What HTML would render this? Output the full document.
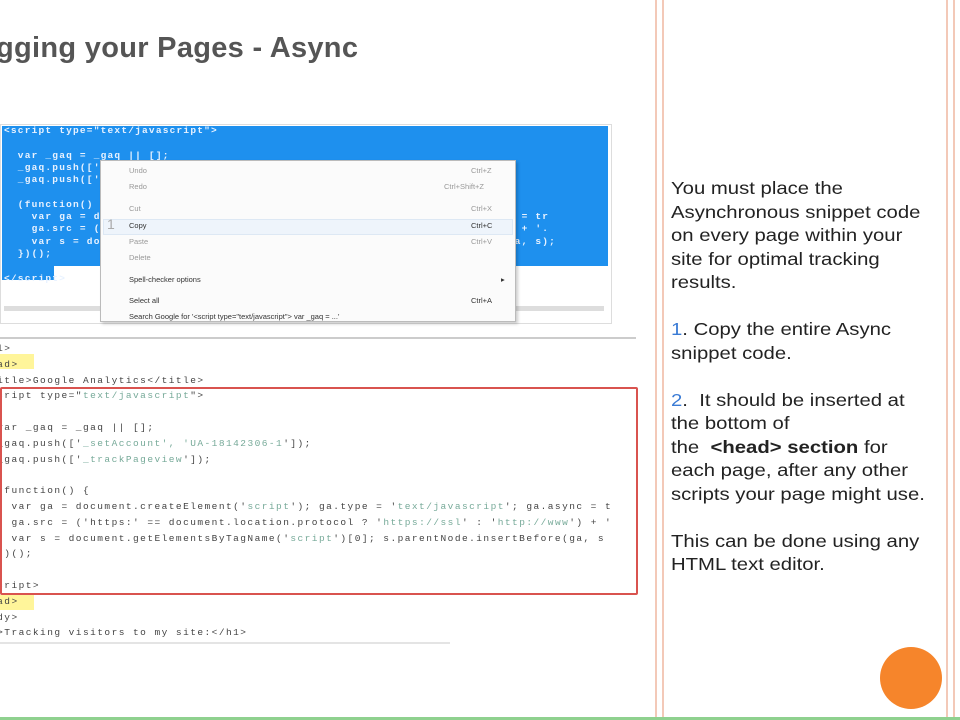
<!DOCTYPE html>
<html><head><meta charset="utf-8"><style>
*{margin:0;padding:0;box-sizing:border-box}
body{width:960px;height:720px;background:#fff;position:relative;overflow:hidden;font-family:"Liberation Sans",sans-serif}
.abs{position:absolute}
.v{position:absolute;top:0;height:718px;width:2px;background:#f3c9b8}
h1{position:absolute;left:-4px;top:32px;font-size:29px;font-weight:bold;color:#555;white-space:nowrap;letter-spacing:0.3px}
.code{font-family:"Liberation Mono",monospace;font-size:9.5px;white-space:pre;line-height:15.8px;color:#444;letter-spacing:1.45px}
.blue{color:#e8f2ff;line-height:12.3px;letter-spacing:1.2px}
.menu{position:absolute;left:100px;top:160px;width:416px;height:162px;background:#fbfbfb;border:1px solid #bbb;box-shadow:2px 2px 3px rgba(0,0,0,.2);font-size:7.5px;color:#999}
.menu div{position:absolute;left:28px;white-space:nowrap}
.txt{position:absolute;left:671px;top:177px;font-size:17.5px;line-height:23.5px;color:#222;white-space:nowrap;transform:scaleX(1.16);transform-origin:0 0}
</style></head><body>
<div class="v" style="left:655px"></div><div class="v" style="left:662px"></div>
<div class="v" style="left:946px"></div><div class="v" style="left:953px"></div>
<div class="abs" style="left:0;top:717px;width:960px;height:3px;background:#8fd18f"></div>
<h1>gging your Pages - Async</h1>
<div class="abs" style="left:0;top:124px;width:612px;height:200px;border:1px solid #ddd;background:#fff"></div>
<div class="abs" style="left:2px;top:126px;width:606px;height:140px;background:#1e90ee"></div>
<div class="abs" style="left:2px;top:266px;width:52px;height:14px;background:#1e90ee"></div>
<div class="abs" style="left:0;top:124px;width:608px;height:160px;overflow:hidden">
<div class="abs code blue" style="left:4px;top:1px;font-weight:bold">&lt;script type="text/javascript"&gt;

  var _gaq = _gaq || [];
  _gaq.push(['
  _gaq.push(['

  (function()
    var ga = d                                                    ga.async = tr
    ga.src = (                                                    ://www") + '.
    var s = do                                                    Before(ga, s);
  })();

&lt;/script&gt;</div></div>
<div class="abs" style="left:4px;top:306px;width:600px;height:5px;background:#ddd"></div>
<div class="menu">
<div style="top:5px">Undo</div>
<div style="top:21px">Redo</div>
<div style="top:43px">Cut</div>
<div style="top:58px;left:2px;width:410px;height:16px;background:#eef4fb;border:1px solid #dde8f4"></div>
<div style="top:60px;color:#333">Copy</div>
<div style="top:55px;left:6px;font-size:14px;color:#aaa">1</div>
<div style="top:76px">Paste</div>
<div style="top:92px">Delete</div>
<div style="top:114px;color:#333">Spell-checker options</div>
<div style="top:135px;color:#333">Select all</div>
<div style="top:151px;color:#333">Search Google for '&lt;script type="text/javascript"&gt; var _gaq = ...'</div>
<div style="top:5px;left:370px">Ctrl+Z</div>
<div style="top:21px;left:343px">Ctrl+Shift+Z</div>
<div style="top:43px;left:370px">Ctrl+X</div>
<div style="top:60px;left:370px;color:#333">Ctrl+C</div>
<div style="top:76px;left:370px">Ctrl+V</div>
<div style="top:114px;left:400px;color:#333">▸</div>
<div style="top:135px;left:370px;color:#333">Ctrl+A</div>
</div>
<div class="abs" style="left:0;top:337px;width:636px;height:2px;background:#ccc"></div>
<div class="abs" style="left:0;top:354px;width:34px;height:15px;background:#fff59a"></div>
<div class="abs" style="left:0;top:595px;width:34px;height:15px;background:#fff59a"></div>
<div class="abs" style="left:0;top:340px;width:634px;height:300px;overflow:hidden">
<div class="abs code" style="left:-10px;top:1px">ml&gt;
ead&gt;
title&gt;Google Analytics&lt;/title&gt;
script type="<span style="color:#7a9">text/javascript</span>"&gt;

 var _gaq = _gaq || [];
 _gaq.push(['<span style="color:#7a9">_setAccount', 'UA-18142306-1</span>']);
 _gaq.push(['<span style="color:#7a9">_trackPageview</span>']);

  function() {
   var ga = document.createElement('<span style="color:#7a9">script</span>'); ga.type = '<span style="color:#7a9">text/javascript</span>'; ga.async = t
   ga.src = ('https:' == document.location.protocol ? '<span style="color:#7a9">https://ssl</span>' : '<span style="color:#7a9">http://www</span>') + '
   var s = document.getElementsByTagName('<span style="color:#7a9">script</span>')[0]; s.parentNode.insertBefore(ga, s
 })();

script&gt;
ead&gt;
ody&gt;
1&gt;Tracking visitors to my site:&lt;/h1&gt;</div></div>
<div class="abs" style="left:0;top:387px;width:638px;height:208px;border:2px solid #d9534f;border-radius:2px"></div>
<div class="abs" style="left:0;top:642px;width:450px;height:2px;background:#e4e4e4"></div>
<div class="txt">You must place the<br>Asynchronous snippet code<br>on every page within your<br>site for optimal tracking<br>results.<br><br><span style="color:#3a7bd5">1</span>. Copy the entire Async<br>snippet code.<br><br><span style="color:#3a7bd5">2</span>.&nbsp; It should be inserted at<br>the bottom of<br>the &nbsp;<b>&lt;head&gt; section</b> for<br>each page, after any other<br>scripts your page might use.<br><br>This can be done using any<br>HTML text editor.</div>
<div class="abs" style="left:880px;top:647px;width:62px;height:62px;border-radius:50%;background:#f6852b"></div>
</body></html>
